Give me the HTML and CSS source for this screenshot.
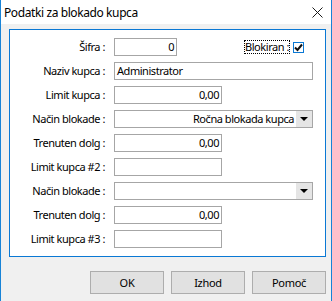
FILE: index.html
```html
<!DOCTYPE html>
<html>
<head>
    <meta charset="UTF-8">
    <title>Podatki za blokado kupca</title>
    <link rel="stylesheet" href="styles.css">
</head>
<body>
    <div class="window">
        <div class="titlebar">
            <span class="title">Podatki za blokado kupca</span>
            <svg class="close" width="11" height="11" viewBox="0 0 11 11">
                <path d="M0.5 0.5 L10.5 10.5 M10.5 0.5 L0.5 10.5" stroke="#1a1a1a" stroke-width="1" fill="none"/>
            </svg>
        </div>
        <div class="content">
            <div class="panel">
                <label class="lbl">Šifra :</label>
                <div class="row-first">
                    <div class="field num short">0</div>
                    <div class="blocked">
                        <span class="focus">Blokiran :</span>
                        <span class="check">
                            <svg width="9" height="9" viewBox="0 0 9 9">
                                <path d="M1 4.5 L3.5 7 L8 1.5" stroke="#111" stroke-width="2" fill="none"/>
                            </svg>
                        </span>
                    </div>
                </div>

                <label class="lbl">Naziv kupca :</label>
                <div class="field wide">Administrator</div>

                <label class="lbl">Limit kupca :</label>
                <div class="field num mid">0,00</div>

                <label class="lbl">Način blokade :</label>
                <div class="field combo wide">
                    <span class="combo-text">Ročna blokada kupca</span>
                    <span class="arrow"></span>
                </div>

                <label class="lbl">Trenuten dolg :</label>
                <div class="field num mid">0,00</div>

                <label class="lbl">Limit kupca #2 :</label>
                <div class="field num mid"></div>

                <label class="lbl">Način blokade :</label>
                <div class="field combo wide">
                    <span class="combo-text"></span>
                    <span class="arrow"></span>
                </div>

                <label class="lbl">Trenuten dolg :</label>
                <div class="field num mid">0,00</div>

                <label class="lbl">Limit kupca #3 :</label>
                <div class="field num mid"></div>
            </div>

            <div class="buttons">
                <button>OK</button>
                <button>Izhod</button>
                <button>Pomoč</button>
            </div>
        </div>
    </div>
</body>
</html>
```

FILE: styles.css
```css
:root {
    --win-border: #1883d7;
    --bg-color: #f0f0f0;
    --field-border: #a6a6a6;
    --button-bg: #e1e1e1;
    --button-border: #adadad;
    --text-color: #000000;
}
html, body {
    margin: 0;
    padding: 0;
}
body {
    font-family: "Noto Sans", "Open Sans", sans-serif;
    font-size: 11px;
    letter-spacing: -0.45px;
    color: var(--text-color);
    width: 332px;
    height: 301px;
    overflow: hidden;
}
.window {
    height: 301px;
    box-sizing: border-box;
    border-left: 1px solid var(--win-border);
    border-right: 1px solid var(--win-border);
    display: flex;
    flex-direction: column;
}
.titlebar {
    height: 24px;
    background: #ffffff;
    display: flex;
    align-items: center;
    justify-content: space-between;
    padding: 0 8px 0 3px;
    box-sizing: border-box;
}
.title {
    font-size: 12px;
    letter-spacing: -0.4px;
    padding-top: 1px;
}
.close {
    display: block;
    margin-top: 1px;
}
.content {
    flex: 1;
    background: var(--bg-color);
    padding: 5px 5px 0 8px;
    display: flex;
    flex-direction: column;
}
.panel {
    background: #ffffff;
    border: 1px solid #0a78d4;
    padding: 8px 12px 8px 0;
    display: grid;
    grid-template-columns: 95px 1fr;
    column-gap: 9px;
    row-gap: 6px;
    align-items: center;
}
.lbl {
    text-align: right;
    white-space: nowrap;
    line-height: 18px;
}
.field {
    height: 18px;
    box-sizing: border-box;
    border: 1px solid var(--field-border);
    background: #ffffff;
    line-height: 16px;
    padding: 0 2px;
    white-space: nowrap;
    overflow: hidden;
}
.num {
    text-align: right;
}
.short {
    width: 63px;
}
.mid {
    width: 108px;
}
.wide {
    width: 199px;
}
.row-first {
    display: flex;
    align-items: center;
}
.blocked {
    margin-left: auto;
    margin-right: 9px;
    display: flex;
    align-items: center;
    gap: 3px;
}
.focus {
    border: 1px dotted #000;
    line-height: 12px;
    padding: 0;
}
.check {
    width: 11px;
    height: 11px;
    box-sizing: border-box;
    border: 1px solid #0a78d4;
    display: flex;
    align-items: center;
    justify-content: center;
}
.check svg {
    display: block;
}
.combo {
    display: flex;
    padding: 0;
}
.combo-text {
    flex: 1;
    text-align: right;
    padding-right: 2px;
}
.arrow {
    width: 16px;
    background: #e5e5e5;
    display: flex;
    align-items: center;
    justify-content: center;
}
.arrow::after {
    content: "";
    border-left: 4px solid transparent;
    border-right: 4px solid transparent;
    border-top: 4px solid #000;
}
.buttons {
    display: flex;
    justify-content: flex-end;
    gap: 7px;
    margin-top: 14px;
}
button {
    width: 74px;
    height: 23px;
    background: var(--button-bg);
    border: 1px solid var(--button-border);
    font-family: "Noto Sans", "Open Sans", sans-serif;
    font-size: 11px;
    letter-spacing: -0.3px;
    color: var(--text-color);
    padding: 0;
}
```
